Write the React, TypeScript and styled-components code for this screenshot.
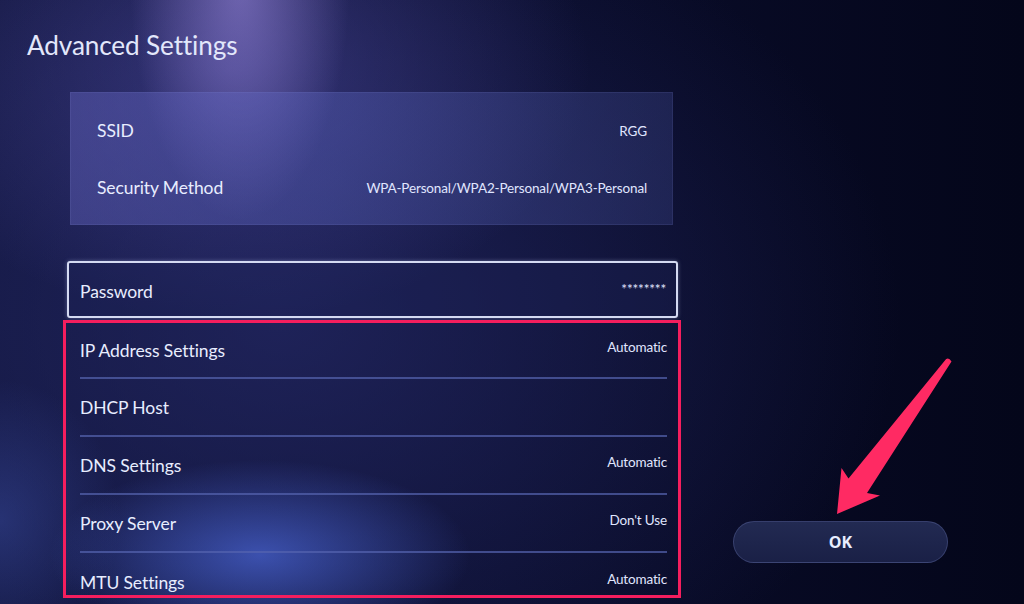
import React from 'react';
import styled, { createGlobalStyle } from 'styled-components';

const GlobalStyle = createGlobalStyle`
  html, body {
    margin: 0;
    padding: 0;
    background: #05071b;
  }
  body {
    font-family: Lato, "Open Sans", "Liberation Sans", sans-serif;
    color: #e4e9ff;
  }
`;

const Screen = styled.div`
  position: relative;
  width: 1024px;
  height: 604px;
  overflow: hidden;
  display: flex;
  flex-direction: column;
  background:
    radial-gradient(ellipse 110px 240px at 240px -20px, rgba(170, 150, 240, 0.55), rgba(120, 110, 220, 0) 100%),
    radial-gradient(ellipse 360px 250px at 230px 70px, rgba(95, 90, 190, 0.42), rgba(60, 60, 150, 0) 100%),
    radial-gradient(ellipse 210px 95px at 260px 555px, rgba(80, 110, 230, 0.65), rgba(40, 60, 160, 0) 100%),
    radial-gradient(ellipse 120px 140px at 0px 520px, rgba(60, 80, 170, 0.45), rgba(40, 60, 160, 0) 100%),
    radial-gradient(ellipse 620px 460px at 280px 320px, rgba(38, 42, 105, 0.7), rgba(20, 25, 70, 0) 100%),
    linear-gradient(90deg, #10143a 0%, #0a0d2c 50%, #04061a 100%);
`;

const Title = styled.h1`
  margin: 0;
  padding: 28px 0 0 27px;
  height: 64px;
  box-sizing: border-box;
  font-size: 26.2px;
  font-weight: 400;
  line-height: 34px;
  letter-spacing: -0.15px;
  color: #e2e7fb;
`;

const Body = styled.div`
  flex: 1;
  display: flex;
  align-items: flex-end;
`;

const Column = styled.div`
  width: 618px;
  margin-left: 63px;
  display: flex;
  flex-direction: column;
  align-self: stretch;
`;

const InfoPanel = styled.div`
  margin: 28px 8px 0 7px;
  padding: 10px 26px 9px 27px;
  background: linear-gradient(100deg, rgba(105, 105, 200, 0.42) 0%, rgba(90, 100, 190, 0.38) 45%, rgba(60, 70, 140, 0.35) 100%);
  box-shadow: inset 0 0 0 1px rgba(140, 150, 220, 0.12);
`;

const Row = styled.div`
  height: 57px;
  display: flex;
  align-items: center;
  justify-content: space-between;
`;

const Label = styled.span<{ $shift?: number }>`
  font-size: 17.5px;
  letter-spacing: -0.1px;
  color: #e8edff;
  transform: translateY(${p => p.$shift ?? 0}px);
`;

const Value = styled.span<{ $shift?: number }>`
  font-size: 13.5px;
  letter-spacing: -0.15px;
  color: #e0e6ff;
  transform: translateY(${p => p.$shift ?? 0}px);
`;

const PasswordBox = styled.div`
  margin: 36px 3px 2px 4px;
  height: 57px;
  box-sizing: border-box;
  border: 2px solid #d4daf2;
  border-radius: 3px;
  padding: 0 10px 0 11px;
  display: flex;
  align-items: center;
  justify-content: space-between;
  background: rgba(30, 35, 85, 0.35);
  box-shadow: 0 0 4px rgba(200, 210, 255, 0.35);
`;

const Highlight = styled.div`
  height: 278px;
  box-sizing: border-box;
  border: 3px solid #f51e5e;
  display: flex;
  flex-direction: column;
  padding: 0 11px 0 14px;
`;

const ListRow = styled.div<{ $last?: boolean }>`
  height: 58px;
  box-sizing: border-box;
  flex-shrink: 0;
  display: flex;
  align-items: center;
  justify-content: space-between;
  border-bottom: ${p => (p.$last ? 'none' : '2px solid rgba(85, 100, 175, 0.7)')};

  &:first-child {
    height: 56px;
  }
`;

const Side = styled.div`
  flex: 1;
  display: flex;
  padding: 0 0 41px 52px;
`;

const OkButton = styled.button`
  width: 215px;
  height: 42px;
  border-radius: 21px;
  border: 1px solid rgba(110, 120, 180, 0.35);
  background: linear-gradient(180deg, #222a52 0%, #1a2046 100%);
  color: #e8eeff;
  font-family: "Open Sans", "Liberation Sans", sans-serif;
  font-weight: 700;
  font-size: 16px;
  cursor: pointer;
`;

const Pointer = styled.svg`
  position: absolute;
  left: 820px;
  top: 350px;
  width: 140px;
  height: 175px;
  pointer-events: none;
`;

const info = [
  { label: 'SSID', value: 'RGG' },
  { label: 'Security Method', value: 'WPA-Personal/WPA2-Personal/WPA3-Personal' },
];

const network = [
  { label: 'IP Address Settings', value: 'Automatic' },
  { label: 'DHCP Host', value: '' },
  { label: 'DNS Settings', value: 'Automatic' },
  { label: 'Proxy Server', value: "Don't Use" },
  { label: 'MTU Settings', value: 'Automatic' },
];

const App: React.FC = () => (
  <>
    <GlobalStyle />
    <Screen>
      <Title>Advanced Settings</Title>
      <Body>
        <Column>
          <InfoPanel>
            {info.map(item => (
              <Row key={item.label}>
                <Label>{item.label}</Label>
                <Value>{item.value}</Value>
              </Row>
            ))}
          </InfoPanel>
          <PasswordBox>
            <Label $shift={2}>Password</Label>
            <Value $shift={-1}>********</Value>
          </PasswordBox>
          <Highlight>
            {network.map((item, i) => (
              <ListRow key={item.label} $last={i === network.length - 1}>
                <Label>{item.label}</Label>
                <Value $shift={-3}>{item.value}</Value>
              </ListRow>
            ))}
          </Highlight>
        </Column>
        <Side>
          <OkButton>OK</OkButton>
        </Side>
      </Body>
      <Pointer viewBox="820 350 140 175">
        <path
          d="M944.5 361 Q948 356 951.5 361.5 L867 493 L880 495.5 L837 514 L841.5 468 L848.5 478.5 Z"
          fill="#ff2a63"
        />
      </Pointer>
    </Screen>
  </>
);

export default App;
